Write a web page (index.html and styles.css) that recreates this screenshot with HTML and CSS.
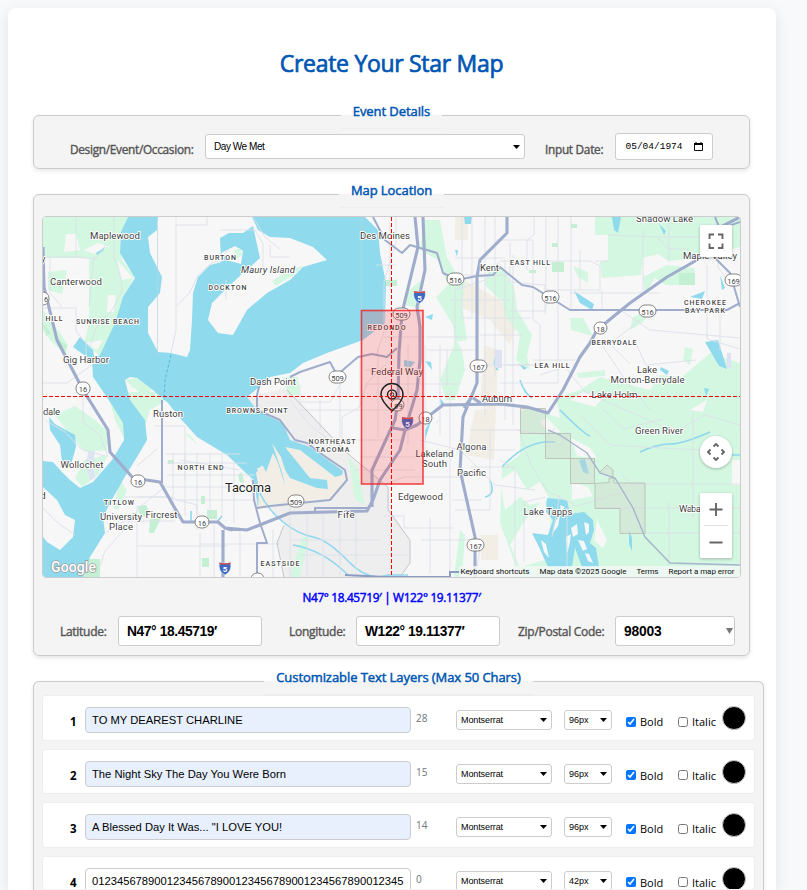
FILE: index.html
```html
<!DOCTYPE html>
<html lang="en">
<head>
<meta charset="utf-8">
<title>Create Your Star Map</title>
<link rel="stylesheet" href="styles.css">
</head>
<body>
<main class="card">
<h1>Create Your Star Map</h1>

<fieldset class="event">
<legend>Event Details</legend>
<div class="event-row">
<label>Design/Event/Occasion:</label>
<span class="select occasion">Day We Met<svg class="caret" viewBox="0 0 7 4"><path d="M0 0h7L3.500 4z"/></svg></span>
<label class="date-label">Input Date:</label>
<span class="date">05/04/1974<svg viewBox="0 0 9 9"><path d="M.5 1.500h8v7h-8z" fill="none" stroke="#111"/><path d="M0 1h9v2H0zM1.500 0h1v2h-1zM6.500 0h1v2h-1z"/></svg></span>
</div>
</fieldset>

<fieldset class="location">
<legend>Map Location</legend>
<div class="map">
<svg viewBox="43 217 697 360" width="697" height="360">
<defs>
<g id="i5"><path d="M-5.500-5.500Q0-4 5.500-5.500Q7.500 3 0 7Q-7.500 3-5.500-5.500z" fill="#3d68c4" stroke="#fff" stroke-width=".5"/><path d="M-5.500-5.500Q0-4 5.500-5.500V-3.500H-5.500z" fill="#d6504b"/><text y="4" font-size="8" font-weight="700" fill="#fff" text-anchor="middle">5</text></g>
</defs>
<rect x="43" y="217" width="697" height="360" fill="#f7f7f8"/>

<!-- urban and industrial areas -->
<path fill="#eeeeef" d="M247 397L287 388 347 453 388 487 390 510 410 540 410 563 400 577H283L277 543 285 525 250 480z"/>
<path fill="#f2eee5" d="M257 470L273 450 285 440 320 452 345 475 338 494 320 502 275 507 256 509z M455 275L500 300 517 325 510 345 490 320 455 305 448 290z M484 345L498 350 496 410 480 405z M475 410L496 408 494 460 466 455z M481 535H498V560H481z M455 217H468V240H455z"/>

<!-- parks and forest -->
<g fill="#d3f7e1">
<path d="M43 217H128L120 240 122 260 134 276 125 297 118 322 100 356 84 343 89 324V258H43z"/>
<path d="M48 272L67 270 62 294 48 290z M43 310L60 333 68 345 66 355 50 340 43 330z M55 415L75 406 95 420 108 432 107 450 85 452 70 435z M84 460L108 455 98 475 82 487 75 478z M108 394L123 423 124 438 115 420z M126 392L160 392 164 402 150 410 145 425 132 408z M137 378L153 390 130 387z M120 480L127 490 124 497 118 510 113 508z"/>
<path d="M424 220H440L447 258 457 275 465 280 462 305 467 340 455 342 453 325 436 297 448 285 438 260 420 250z M407 292L424 278 420 308 404 305z M500 290L515 292 517 310 532 335 527 355 530 370 516 360 520 335 505 315z M440 380L456 340 462 350 465 370 455 400 446 400z M505 270L515 290 500 300 485 285 490 265z"/>
<path d="M595 217H740V247L700 258 668 261 658 254 643 258 641 275 602 278 600 262 608 260V235H595z M643 277L667 265 695 268 693 285 665 285 655 278 645 294z M573 266L588 272 588 283 578 277z M570 318L583 318 593 336 571 330z M633 317L653 308 642 323 630 330z M685 347L693 349 690 365 683 360z M577 373L605 370 605 376 578 378z"/>
<path d="M556 398L580 390 600 377 650 390 660 375 682 377 710 353 740 363V577H520L500 523 502 467 520 455V412L528 408 560 418z"/>
<path d="M348 456L358 470 365 505 355 500z M302 537H309L300 577H290z M460 530L465 535 462 577H454z M283 377H298L300 395H288z M184 433L192 440 198 445 190 435z"/>
</g>
<g fill="#c3efd3">
<path d="M177 275H189V288H177z M233 287h6v7h-6z M236 250l5-2 1 8-5 2z M302 273L270 282 273 270 300 267z M384 280H397V286H384z M552 262H564V272H552z M679 273H695V285H679z M529 270h7v3h-7z M552 243h6v4h-6z M571 224h6v4h-6z M150 519L161 518 154 533H149z M207 510h10v9h-10z M202 558H209V567H202z M168 460h6v4h-6z M138 506l8-1 4 9-10 4z M201 496h4v8h-4z M83 559H100V577H83z M43 323l8 10-5 3z M57 337l10 9-5 8z M238 475l4-3 2 11-4-1z"/>
</g>
<g fill="#f7f7f8">
<path d="M66 234L76 234 80 250 64 252z M108 246L94 254 84 250 98 243z M117 260L133 278 122 280z M108 295H116L114 312H107z M85 343L103 340 97 350z M500 480L515 470 527 490 540 482 550 500 530 505 520 497 505 510z M571 438L590 448 597 458 577 456z M572 482L588 487 593 496 572 500z M525 520L543 500 552 510 545 560 520 567 510 545z M597 520L607 540 603 548 594 540z M570 400L583 392 605 395 595 407z M690 410L707 400 703 412z M732 460h8v25h-8z M546 417l15 15-13 0-8-10z"/>
</g>

<!-- water -->
<g fill="#90daee">
<path d="M128 217L121 232 120 253 135 278 123 297 115 323 100 355 92 360 93 377 102 390 112 405 123 423 124 440 112 460 93 482 80 488 70 480 60 470 53 462 43 461V577H83L90 557 105 533 103 517 110 503 123 480 137 457 147 440 145 420 130 400 125 380 130 377 137 378 153 390 168 403 180 418 197 437 227 455 248 475 254 480 258 508 259 490 256 473 262 465 266 472 273 453 278 463 285 485 280 462 290 478 317 488 328 489 327 480 310 478 285 447 300 450 335 477 342 475 343 471 310 447 290 440 283 423 270 417 257 410 247 397 258 388 270 377 290 373 303 363 327 353 363 340 385 323 386 283 380 253 378 230 365 217z"/>
<path d="M49 417L55 424 75 435 76 447 70 468 62 462 60 445 50 430z M73 347L80 337 93 350 95 363z M96 253l9-6-2 4-6 4z"/>
<path d="M547 498L567 500 570 514 584 512 593 520 594 530 590 543 596 548 599 567H582L575 548 572 567H548L538 545 532 533 540 534 548 535 553 520 546 512z M574 291L594 304 592 310 580 303z M705 342L718 340 727 369 719 366z M661 367L669 371 667 375 660 370z M720 275L725 288 722 290z M612 217H621L618 233 614 230z M659 224L666 231 664 235z M690 297L705 291 702 299z M404 360L415 362 410 368 404 366z M425 317L433 314 432 320z M425 430L432 418 425 440z M432 370L431 362 425 361z M437 422L440 416 436 425z M464 217h8l-1 7h-6z M455 250h3l-1 7z M440 398l4 5-3 4z M579 460l4 12 6 2-4-15z M629 530l3 8 0 13-3-7z M704 388l5 1-3 7z M518 363l9 5-3 2z"/>
</g>
<path fill="#f4f8f7" d="M536 516l9 4-1 10-4-4zM556 520l4-4-2 10-6 8zM571 528l6-4 1 10-5 3zM584 522l5 2 0 8-3 3zM566 537l5-3-1 8-3 12zM541 540l5 4 3 14-5-6zM578 540l6 1 3 8-4 2zM560 505l5 2-4 4zM585 553l4 1 4 9-5-2z"/>
<path d="M222 516l-5 6m-26-11v12M348 575q-25-25-55-30M258 490q10 20 25 32t30 15 35 24 40 14h20M490 480q6 15-5 17M502 467q25-28 53-25M560 410q25 25 30 26M640 452q17-8 30-8t40-12M720 455h20M520 380q4 13 12 18M500 350q-10 14-2 20" fill="none" stroke="#8ed7ee" stroke-width="1.600"/>

<!-- islands and peninsulas -->
<path fill="#f7f7f8" d="M158 217L157 230 148 237 150 253 162 277 160 293 148 307V333L158 352 171 353 187 357 190 350 192 320 193 293 198 277 210 265 222 262 243 273 225 290 212 303 208 320 218 333 233 335 247 310 267 293 290 280 303 267 327 260 313 247 290 238 270 237 258 230 252 217z"/>
<path fill="#90daee" d="M221 262L220 238 229 233 243 233 253 226 256 240 260 258 247 270 232 272z"/>
<path fill="#f7f7f8" d="M221 253L235 246 243 251 241 264 230 261z M43 487L57 500 65 515 75 520 73 537 60 550 47 542 43 537z"/>
<path fill="#d3f7e1" d="M125 380l12-2 23 22-8 3z M234 250l6-2 2 7-5 4z M272 281l18-12 13-3-8 8-19 12z"/>
<path d="M272 443l12 35 4 1-7-22zM257 468l8 30 3-1-4-30z" fill="#f2eee5"/>
<path fill="#dde3f2" d="M88 452l7-1-2 16 2 11-5 2-4-14zM727 353h4v15h-4zM495 350h7v18h-7z"/>

<!-- local streets -->
<g class="street">
<path d="M43 257H76V217M76 257l20 2 10-15M94 256l-5 50M43 308h33v23l10 12v19M43 383h24l30-22M50 257v36l12 14M114 217v40q8 20 8 35l-10 18-15 16-8 22M176 217V225H207V217M176 225V330L171 353M176 307l14-15 8-17 15-13 13-2M222 256l8-8M253 217l12 20 15 12M220 230h35l8 14v24M290 257H270V245M226 280v20"/>
<path d="M83 392v30l17 13 8 22M45 420l20 12 16 17 24 7M43 508l15 15 17 12M100 566l5-15 18-20 18-25 25-20M105 533l20-12h50M137 506V577M137 497h36M137 546h90M155 426h30V480M165 454h75M173 453v63M185 453v63M197 453v63M210 453v63M222 453v63M234 463v60M167 463h80M167 475h88M167 487h92M176 500h84M200 544h80M200 533v44M214 525v52M240 530v47M273 530v47M290 500v77M307 510v67M323 510v67M340 510v67M356 510v67M290 540h90M300 555h107M125 497h42l30 8v25M137 466l20-17M180 460l60 10"/>
<path d="M390 225v65M396 217v25l-12 40v50l-8 24M376 265h20M384 337h40M365 370h60M365 384h95M378 348v90M408 345v100M425 345v105M440 345v90M427 337h50M427 350h20v35M447 350h30M455 345V290l30-10 14-18M462 217v100M472 217v100M485 217v200M495 217v160M505 260v160M455 258h50M460 275h50M450 300h60M460 318h70M480 335h42M470 365h60M470 430h50M470 450h45M470 467h45M513 255v170M495 240h38v80l7 5v40h-35M527 240V270M546 217v94H510M558 217V383M571 217v94M580 290v-40M500 383h58M527 240l7-5v-18M510 242v40l35 3v30M533 360h42M595 261h13M608 235l50 2 10 12 20 0M643 230v65M669 217v45M500 261h90l10 5v24H545M602 290V310M570 293h90M658 237h60v30l14 20M707 265v74l33 10M720 310v40M620 310l30 20 90 8M640 320l-30 24 20 20M602 345l20 30 28 35M634 340l12 25 50-5"/>
<path d="M450 390v187M420 440l40 10 35 35 40 5M384 485l20-8h60M384 516h20v12h50M430 517v57M421 540h60l-5 37M452 500h30M490 430v80h-35M500 460l15 10v107M520 433l10 30 17 28 30 15 50-15M540 375l25-8 20 25 90 40 30-17 35 10M580 415l30 30 90 5 20-15M603 409l20 20 40-10M622 475l10 9h108M693 410v107M669 502v63M645 533h95M560 495l-8 42M567 508v60M595 508h145M524 562v-60l22-5M517 430l30 5 8-7"/>
<path d="M290 400l20 25 25 20M300 385v17h30l10-18M320 400v30M340 384v66M360 357v50l-18 10v30M300 410h95M340 440h65M360 457h60M355 470h60M385 365l-18 18-8 25"/>
</g>
<path d="M287 390L347 453 388 487V510L410 540V563L400 577M284 525L277 543 284 577" fill="none" stroke="#c4c6cb"/>
<path d="M361.500 217v130M157.500 225v130" stroke="#b9d4da" fill="none" stroke-width=".7"/>
<path d="M171 355l-6 25-1 20" fill="none" stroke="#56b6d8" stroke-dasharray="3 2"/>

<!-- reservation blocks -->
<g fill="#d6ccc5" fill-opacity=".3" stroke="#b9beb7" stroke-width=".9"><path d="M520.500 408.500h25v25h-25zM545.500 433.500h25v25h-25zM570.500 458.500h24v25h-24zM595 483.500l14-1V478h5v5h31v50.500h-25v-25h-25zM600 472l7-7 6 5v8"/></g>

<!-- highways -->
<g class="highway">
<path d="M43 247L44 287 57 340 83 390 108 430 110 452 133 478 160 482 173 505 183 522H218L225 528 247 530 280 517 290 513 367 511 373 500 380 480 400 450 405 430 417 390 420 360V327L417 307 425 270 423 217M223 577V530M225 528L232 530"/>
<path d="M415 217L418 247 402 313 399 353 398 400 395 420 372 470V507M507 217V233L480 260 477 277V383L470 400 463 417 460 470 475 537V577M393 428L405 430 417 425 443 405 500 404 527 407 548 413 563 390 580 357 590 343 597 330 630 303 667 277 697 260 715 230 740 217M471 398l-7 10M473 398l9 6"/>
</g>
<g class="route">
<path d="M162 483V400M253 480L254 500 260 523 267 543H257V577M257 508L270 506 330 500 347 480 345 470 323 455 307 443 295 440 280 420 257 410V395L260 383M290 377L300 372 330 362 337 375 358 357 372 354 387 357 397 348M373 217L385 240 402 253 410 245 437 253 443 273 457 280 477 276 493 275 500 267 522 285 533 287 570 310H727L740 303M715 258L730 273 740 307M715 217l5 12 20-7M315 513v-5H370"/>
</g>
<path d="M548 430L560 435 587 453 600 473 615 478 633 508 645 537 670 563 740 565" fill="none" stroke="#a9b3cc" stroke-width="1.400"/>
<path d="M345 575l40 2h65v-5h20" fill="none" stroke="#8b9cc4" stroke-width="2"/>

<!-- route shields -->
<g class="shield">
<rect x="76" y="382" width="14" height="13" rx="6"/><text x="83" y="392">16</text>
<rect x="31" y="292" width="18" height="13" rx="6"/><text x="46" y="302">6</text>
<rect x="131" y="475" width="14" height="12" rx="6"/><text x="138" y="484.500">16</text>
<rect x="195" y="516" width="14" height="12" rx="6"/><text x="202" y="525.500">16</text>
<rect x="251" y="573" width="13" height="12" rx="6"/>
<rect x="288" y="495" width="16" height="12" rx="6"/><text x="296" y="504.500">509</text>
<rect x="329" y="371" width="17" height="12" rx="6"/><text x="337.500" y="380.500">509</text>
<rect x="393" y="308" width="17" height="12" rx="6"/><text x="401.500" y="317.500">509</text>
<rect x="447" y="273" width="17" height="12" rx="6"/><text x="455.500" y="282.500">516</text>
<rect x="542" y="291" width="17" height="12" rx="6"/><text x="550.500" y="300.500">516</text>
<rect x="639" y="305" width="17" height="12" rx="6"/><text x="647.500" y="314.500">516</text>
<rect x="594" y="322" width="13" height="12" rx="6"/><text x="600.500" y="331.500">18</text>
<rect x="725" y="274" width="17" height="12" rx="6"/><text x="733.500" y="283.500">169</text>
<rect x="470" y="360" width="17" height="12" rx="6"/><text x="478.500" y="369.500">167</text>
<rect x="467" y="539" width="17" height="12" rx="6"/><text x="475.500" y="548.500">167</text>
<rect x="419" y="412" width="13" height="12" rx="6"/><text x="425.500" y="421.500">18</text>
<rect x="391" y="399" width="13" height="12" rx="6"/><text x="398.500" y="408.500">99</text>
</g>
<use href="#i5" x="419.500" y="296.500"/><use href="#i5" x="407.500" y="422.500"/><use href="#i5" x="225" y="568"/>

<!-- place names -->
<g class="place">
<text x="115" y="238.500" textLength="50">Maplewood</text>
<text x="76" y="284.500" textLength="52">Canterwood</text>
<text x="86" y="363" textLength="46">Gig Harbor</text>
<text x="268" y="272.500" textLength="54" font-style="italic">Maury Island</text>
<text x="273" y="384.500" textLength="46">Dash Point</text>
<text x="385" y="239" textLength="50">Des Moines</text>
<text x="489.500" y="271" textLength="19">Kent</text>
<text x="664.500" y="222" textLength="57">Shadow Lake</text>
<text x="710" y="258.500" textLength="54">Maple Valley</text>
<text x="397" y="375" textLength="52">Federal Way</text>
<text x="647" y="372.500" textLength="20">Lake</text>
<text x="647.500" y="382.500" textLength="74">Morton-Berrydale</text>
<text x="614.500" y="397.500" textLength="46">Lake Holm</text>
<text x="497" y="401.500" textLength="30">Auburn</text>
<text x="51.500" y="414.500" textLength="17">dale</text>
<text x="168" y="416.500" textLength="30">Ruston</text>
<text x="82" y="468" textLength="43">Wollochet</text>
<text x="121" y="520" textLength="42">University</text>
<text x="121" y="529.500" textLength="24">Place</text>
<text x="161.500" y="517.500" textLength="32">Fircrest</text>
<text x="346" y="518" textLength="17">Fife</text>
<text x="420.500" y="500" textLength="45">Edgewood</text>
<text x="434.500" y="457" textLength="38">Lakeland</text>
<text x="434.500" y="467" textLength="25">South</text>
<text x="471.500" y="449.500" textLength="30">Algona</text>
<text x="471.500" y="475.500" textLength="29">Pacific</text>
<text x="659" y="433.500" textLength="48">Green River</text>
<text x="548" y="514.500" textLength="49">Lake Tapps</text>
<text x="690" y="512" textLength="22">Waba</text>
<text x="248" y="492" textLength="46" font-size="13" fill="#222">Tacoma</text>
<text x="43" y="499">d</text><text x="43" y="262">y</text>
</g>
<g class="district">
<text x="220" y="260" textLength="32">BURTON</text>
<text x="227.500" y="289.500" textLength="38">DOCKTON</text>
<text x="54" y="321" textLength="17">HILL</text>
<text x="107.500" y="323.500" textLength="63">SUNRISE BEACH</text>
<text x="386.500" y="329.500" textLength="38">REDONDO</text>
<text x="530" y="264.500" textLength="40">EAST HILL</text>
<text x="705" y="305" textLength="42">CHEROKEE</text>
<text x="705" y="312.500" textLength="40">BAY PARK</text>
<text x="614" y="345" textLength="45">BERRYDALE</text>
<text x="552" y="368" textLength="35">LEA HILL</text>
<text x="257" y="413" textLength="61">BROWNS POINT</text>
<text x="200.500" y="469.500" textLength="46">NORTH END</text>
<text x="332" y="444" textLength="47">NORTHEAST</text>
<text x="332.500" y="451.500" textLength="34">TACOMA</text>
<text x="119" y="505" textLength="30">TITLOW</text>
<text x="280" y="566" textLength="39">EASTSIDE</text>
</g>

<!-- print area, pin and crosshair -->
<rect x="361.500" y="310.500" width="61.500" height="173.500" fill="#ff1010" fill-opacity=".17" stroke="#f0282c" stroke-opacity=".85" stroke-width="1.600"/>
<path d="M392 411Q381 401 381 394.500A11 11 0 0 1 403 394.500Q403 401 392 411z" fill="none" stroke="#222" stroke-width="1.500"/>
<circle cx="392" cy="394.500" r="4.500" fill="none" stroke="#222" stroke-width="1.400"/><circle cx="392" cy="394.500" r="1.800" fill="none" stroke="#333"/>
<path d="M43 396.500H740M391.500 217V577" stroke="#f00" stroke-dasharray="4 2" fill="none"/>

<!-- map controls -->
<text x="51" y="572" class="brand" textLength="45">Google</text>
<rect x="459" y="566" width="281" height="11" fill="#f5f8f7" fill-opacity=".8"/>
<g class="credits"><text x="460.500" y="574" textLength="69">Keyboard shortcuts</text><text x="539.500" y="574" textLength="87">Map data ©2025 Google</text><text x="636.500" y="574" textLength="22">Terms</text><text x="668.500" y="574" textLength="66">Report a map error</text></g>
<g class="control"><rect x="700" y="225" width="32" height="32" rx="1"/><circle cx="716" cy="452" r="16"/><rect x="700" y="493" width="32" height="65" rx="1"/></g>
<path d="M709.500 239v-4.500h4.500M718 234.500h4.500v4.500M722.500 243.500v4.500H718M714 248h-4.500v-4.500M709.500 509.500h13M716 503v13M709.500 542.500h13M713.500 446.500l2.500-2.500 2.500 2.500M713.500 457.500l2.500 2.500 2.500-2.500M710.500 449.500l-2.500 2.500 2.500 2.500M721.500 449.500l2.500 2.500-2.500 2.500" fill="none" stroke="#666" stroke-width="1.900"/>
<path d="M704 525.500h24" stroke="#e2e2e2"/>
</svg>
</div>
<p class="coords">N47° 18.45719′ | W122° 19.11377′</p>
<div class="geo-row">
<label class="lat-label">Latitude:</label><span class="geo">N47° 18.45719′</span>
<label class="lon-label">Longitude:</label><span class="geo">W122° 19.11377′</span>
<label class="zip-label">Zip/Postal Code:</label><span class="geo zip">98003<svg viewBox="0 0 7 6"><path d="M0 0h7L3.500 6z" fill="#777"/></svg></span>
</div>
</fieldset>

<fieldset class="layers">
<legend>Customizable Text Layers (Max 50 Chars)</legend>
<div class="layer"><b>1</b><span class="line filled">TO MY DEAREST CHARLINE</span><span class="count">28</span><span class="select family">Montserrat<svg class="caret" viewBox="0 0 7 4"><path d="M0 0h7L3.500 4z"/></svg></span><span class="select size">96px<svg class="caret" viewBox="0 0 7 4"><path d="M0 0h7L3.500 4z"/></svg></span><label class="check bold"><input type="checkbox" checked>Bold</label><label class="check"><input type="checkbox">Italic</label><i class="swatch"></i></div>
<div class="layer"><b>2</b><span class="line filled">The Night Sky The Day You Were Born</span><span class="count">15</span><span class="select family">Montserrat<svg class="caret" viewBox="0 0 7 4"><path d="M0 0h7L3.500 4z"/></svg></span><span class="select size">96px<svg class="caret" viewBox="0 0 7 4"><path d="M0 0h7L3.500 4z"/></svg></span><label class="check bold"><input type="checkbox" checked>Bold</label><label class="check"><input type="checkbox">Italic</label><i class="swatch"></i></div>
<div class="layer"><b>3</b><span class="line filled">A Blessed Day It Was... "I LOVE YOU!</span><span class="count">14</span><span class="select family">Montserrat<svg class="caret" viewBox="0 0 7 4"><path d="M0 0h7L3.500 4z"/></svg></span><span class="select size">96px<svg class="caret" viewBox="0 0 7 4"><path d="M0 0h7L3.500 4z"/></svg></span><label class="check bold"><input type="checkbox" checked>Bold</label><label class="check"><input type="checkbox">Italic</label><i class="swatch"></i></div>
<div class="layer"><b>4</b><span class="line">01234567890012345678900123456789001234567890012345</span><span class="count">0</span><span class="select family">Montserrat<svg class="caret" viewBox="0 0 7 4"><path d="M0 0h7L3.500 4z"/></svg></span><span class="select size">42px<svg class="caret" viewBox="0 0 7 4"><path d="M0 0h7L3.500 4z"/></svg></span><label class="check bold"><input type="checkbox" checked>Bold</label><label class="check"><input type="checkbox">Italic</label><i class="swatch"></i></div>
</fieldset>
</main>
</body>
</html>
```
FILE: styles.css
```css
* { box-sizing: border-box; }
html { overflow: hidden; }
body {
  margin: 0;
  padding: 8px 8px 0;
  height: 890px;
  overflow: hidden;
  background: #f8f9fb;
  font-family: "Open Sans", sans-serif;
  font-size: 12px;
  color: #000;
}
.card {
  width: 768px;
  height: 882px;
  padding: 40px 25px 0;
  background: #fff;
  border-radius: 8px 8px 0 0;
  box-shadow: 0 4px 16px rgba(0, 0, 0, .09);
}
h1 {
  margin: 0;
  padding-right: 1px;
  height: 54px;
  line-height: 30px;
  font-size: 23px;
  letter-spacing: -.3px;
  font-weight: 400;
  -webkit-text-stroke: .7px #0056b3;
  color: #0056b3;
  text-align: center;
}
fieldset {
  width: 717px;
  margin: 0 0 12px;
  padding: 8px;
  border: 1px solid #ccc;
  border-radius: 6px;
  background: #f4f4f4;
  box-shadow: 0 2px 4px rgba(0, 0, 0, .1);
  min-width: 0;
}
legend {
  margin: 0 auto;
  height: 27px;
  padding: 0 12px;
  border-bottom: 1px solid #eee;
  line-height: 19px;
  font-size: 13px;
  letter-spacing: -.07px;
  font-weight: 400;
  -webkit-text-stroke: .5px #0056b3;
  color: #0056b3;
  white-space: nowrap;
}
label { color: #555; white-space: nowrap; -webkit-text-stroke: .4px #555; letter-spacing: -.28px; }
.event { height: 67px; padding-top: 4px; }
.location { height: 475px; }
.layers { width: 731px; height: 222px; margin-bottom: 0; padding-top: 0; padding-bottom: 0; border-bottom: 0; border-radius: 6px 6px 0 0; }

.event-row { display: flex; align-items: flex-start; padding-left: 28px; }
.event-row label { width: 135px; padding-top: 8px; line-height: 16px; font-size: 11.8px; }
.event-row .date-label { width: 70px; margin-left: 20px; }
.select {
  display: flex;
  align-items: center;
  justify-content: space-between;
  border: 1px solid #ccc;
  border-radius: 3px;
  background: #fff;
  font: 9px "Liberation Sans", Arial, sans-serif;
}
.caret { width: 7px; height: 4px; }
.occasion { width: 320px; height: 25px; margin-top: 1px; padding: 0 4px 0 8px; font-size: 10px; letter-spacing: -.45px; }
.date {
  display: flex;
  align-items: center;
  gap: 11px;
  width: 98px;
  height: 27px;
  padding-left: 9.5px;
  border: 1px solid #ccc;
  border-radius: 3px;
  background: #fff;
  font: 9.5px "Liberation Mono", monospace;
}
.date svg { width: 9px; height: 9px; }

.map { height: 362px; border: 1px solid #ccc; border-radius: 4px; overflow: hidden; }
.map svg { display: block; font-family: Roboto, sans-serif; }
.street { fill: none; stroke: #dbe0e9; stroke-width: .9; }
.highway { fill: none; stroke: #9faccb; stroke-width: 3.1; stroke-linejoin: round; }
.route { fill: none; stroke: #9faccb; stroke-width: 2; stroke-linejoin: round; }
.shield rect { fill: #fff; stroke: #777; stroke-width: .9; }
.shield text { font-size: 7.5px; text-anchor: middle; fill: #444; }
.place text, .district text {
  text-anchor: middle;
  stroke: #fff;
  stroke-width: 1.8px;
  stroke-linejoin: round;
  paint-order: stroke;
}
.place { font-size: 9.6px; fill: #3d3d3d; }
.district { font-size: 7px; font-weight: 500; fill: #444; }
.brand { font: 500 14px Roboto, sans-serif; fill: #fff; stroke: #999; stroke-width: 1.4px; paint-order: stroke; }
.credits { font-size: 8px; fill: #111; }
.control { fill: #fff; filter: drop-shadow(0 1px 1.5px rgba(0, 0, 0, .25)); }

.coords { margin: 10px 0 1px; line-height: 18px; text-align: center; font-size: 11.8px; letter-spacing: -.32px; -webkit-text-stroke: .45px #00f; color: #00f; }
.geo-row { display: flex; align-items: center; height: 30px; margin-top: 10px; }
.geo-row label { font-size: 12px; }
.lat-label { width: 76px; padding-left: 18px; }
.lon-label { width: 94px; padding-left: 27px; }
.zip-label { width: 115px; padding-left: 18px; }
.geo {
  width: 144px;
  height: 30px;
  padding-left: 8px;
  border: 1px solid #ccc;
  border-radius: 3px;
  background: #fff;
  font: bold 13.8px/29px "Liberation Sans", Arial, sans-serif;
  letter-spacing: -.4px;
}
.zip { display: flex; justify-content: space-between; align-items: center; width: 120px; padding-right: 1px; letter-spacing: -.2px; }
.zip svg { width: 7px; height: 6px; }

.layer {
  display: flex;
  align-items: flex-start;
  width: 713px;
  height: 45.6px;
  margin-bottom: 8px;
  border: 1px solid #eee;
  border-radius: 3px;
  background: #fff;
}
.layer:last-child { height: 33px; margin-bottom: 0; border-bottom: 0; overflow: hidden; }
.layer b { width: 42px; padding: 17px 8.5px 0 0; text-align: right; line-height: 18px; font-size: 11.5px; font-weight: 700; }
.line {
  width: 326px;
  height: 26px;
  margin-top: 11px;
  padding-left: 6px;
  border: 1px solid #ccc;
  border-radius: 4px;
  background: #fff;
  font: 11.21px/24px "Liberation Sans", Arial, sans-serif;
  white-space: nowrap;
  overflow: hidden;
}
.filled { background: #e8f0fe; }
.count { width: 45px; padding: 15px 0 0 5px; font-size: 10px; line-height: 14px; color: #6c757d; }
.family { width: 96px; height: 20px; margin-top: 14px; padding: 0 4px; letter-spacing: -.1px; }
.size { width: 48px; height: 20px; margin: 14px 14px 0 12px; padding: 0 4px; }
.check {
  display: flex;
  align-items: center;
  gap: 4px;
  width: 44px;
  height: 18px;
  margin-top: 16.5px;
  font-size: 11px;
  letter-spacing: 0;
  color: #000;
  -webkit-text-stroke: 0;
}
.check.bold { width: 52px; }
.check input { width: 10px; height: 10px; margin: 0; }
.swatch { width: 24px; height: 24px; margin-top: 10px; border: 1px solid #ccc; border-radius: 50%; background: #000; }
```
